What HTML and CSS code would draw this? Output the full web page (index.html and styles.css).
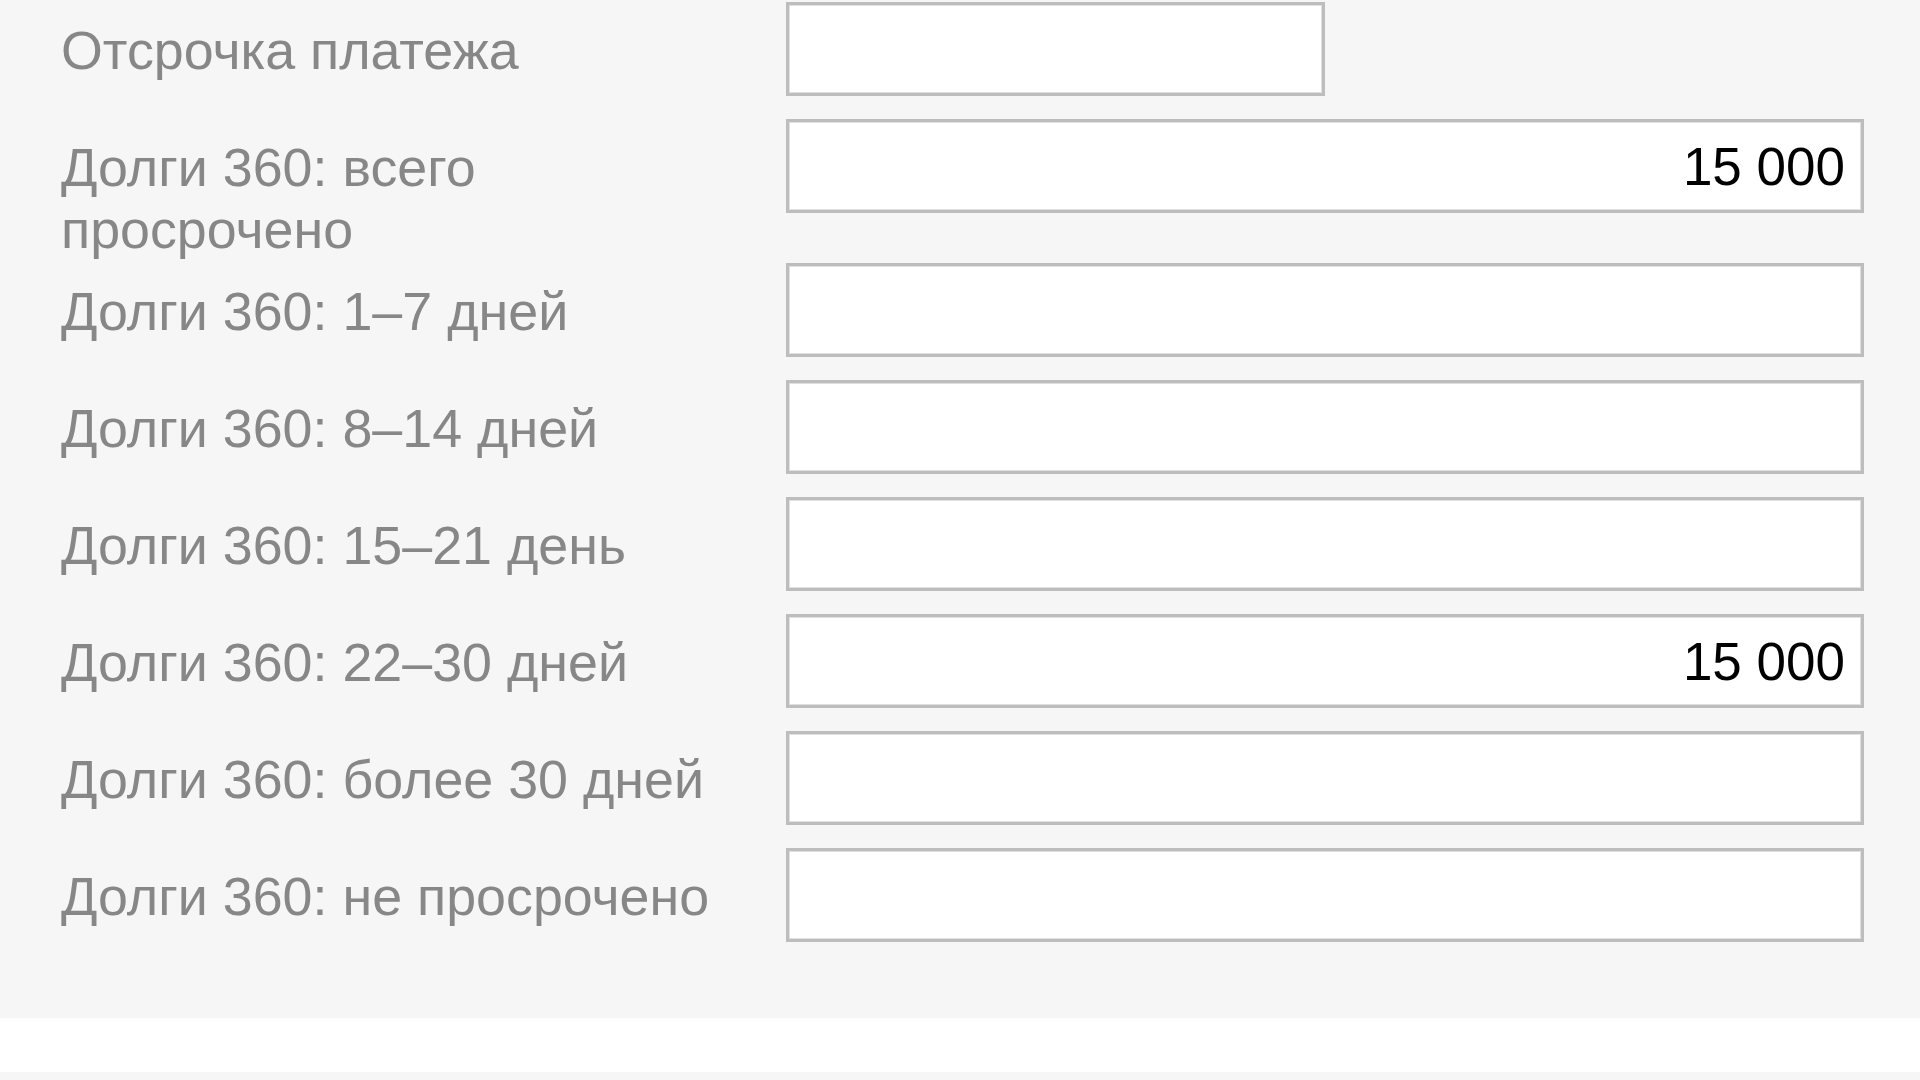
FILE: index.html
```html
<!DOCTYPE html>
<html lang="ru">
<head>
    <meta charset="utf-8">
    <title>Долги 360</title>
    <link rel="stylesheet" href="styles.css">
</head>
<body>
    <div class="panel">
        <div class="form-row">
            <label class="field-label">Отсрочка платежа</label>
            <div class="field"><input class="field-input field-input--half" type="text"></div>
        </div>
        <div class="form-row">
            <label class="field-label">Долги 360: всего просрочено</label>
            <div class="field"><input class="field-input" type="text" value="15 000" readonly></div>
        </div>
        <div class="form-row">
            <label class="field-label">Долги 360: 1–7 дней</label>
            <div class="field"><input class="field-input" type="text"></div>
        </div>
        <div class="form-row">
            <label class="field-label">Долги 360: 8–14 дней</label>
            <div class="field"><input class="field-input" type="text"></div>
        </div>
        <div class="form-row">
            <label class="field-label">Долги 360: 15–21 день</label>
            <div class="field"><input class="field-input" type="text"></div>
        </div>
        <div class="form-row">
            <label class="field-label">Долги 360: 22–30 дней</label>
            <div class="field"><input class="field-input" type="text" value="15 000" readonly></div>
        </div>
        <div class="form-row">
            <label class="field-label">Долги 360: более 30 дней</label>
            <div class="field"><input class="field-input" type="text"></div>
        </div>
        <div class="form-row">
            <label class="field-label">Долги 360: не просрочено</label>
            <div class="field"><input class="field-input" type="text"></div>
        </div>
    </div>
    <div class="spacer"></div>
</body>
</html>
```

FILE: styles.css
```css
body {
    margin: 0;
    background-color: #f6f6f6;
    font-family: "Liberation Sans", Arial, sans-serif;
}

.panel {
    background-color: #f6f6f6;
    padding: 2px 56px 53px 61px;
}

.form-row {
    display: grid;
    grid-template-columns: 725px 1fr;
    align-items: start;
}

.field-label {
    padding: 17px 20px 3px 0;
    font-size: 53.8px;
    line-height: 62px;
    color: #878787;
}

.field {
    margin-bottom: 23px;
}

.field-input {
    display: block;
    box-sizing: border-box;
    width: 100%;
    height: 94px;
    margin: 0;
    padding: 0 16px;
    border: 3px solid #bdbdbd;
    box-shadow: inset 0 0 0 1px #e0e0e0;
    border-radius: 0;
    background: #ffffff;
    font-family: "Liberation Sans", Arial, sans-serif;
    font-size: 53px;
    color: #000000;
    text-align: right;
    outline: none;
}

.field-input--half {
    width: 50%;
}

.spacer {
    height: 54px;
    background-color: #ffffff;
}
```
